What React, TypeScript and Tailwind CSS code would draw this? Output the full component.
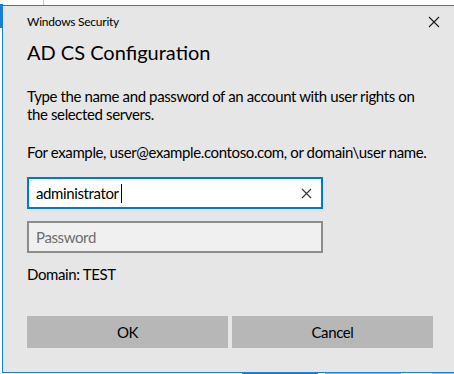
import React from "react";

export default function App() {
  const font = { fontFamily: 'Lato, "Noto Sans", Arial, sans-serif' };
  return (
    <div className="relative w-[454px] h-[374px] bg-white overflow-hidden" style={font}>
      {/* background decorations behind the dialog */}
      <div className="absolute left-0 top-[4px] w-[3px] h-[24px] bg-[#1a7fd4]" />
      <div className="absolute left-[43px] top-0 w-px h-[5px] bg-[#c8c8c8]" />
      <div className="absolute left-[242px] top-[373px] w-[76px] h-px bg-[#5c6770]" />
      <div className="absolute left-[325px] top-[373px] w-[76px] h-px bg-[#a3abb3]" />
      <div className="absolute left-[432px] top-[373px] w-[22px] h-px bg-[#b3bac1]" />

      {/* dialog */}
      <div className="absolute left-[2px] top-[5px] w-[470px] h-[368px] border border-[#1883d7] bg-[#e6e6e6] text-black">
        <div className="pl-[24px] pr-[38px]">
          <div className="flex items-center justify-between pt-[5px] h-[27px]">
            <span className="text-[12px] leading-[16px] tracking-[-0.25px]">Windows Security</span>
            <svg width="12" height="12" viewBox="0 0 12 12" className="mr-[-7px]">
              <path d="M1 1 L11 11 M11 1 L1 11" stroke="#1a1a1a" strokeWidth="1.1" fill="none" />
            </svg>
          </div>
          <div className="mt-[5px] text-[20px] leading-[28px]">AD CS Configuration</div>
          <p className="mt-[21px] text-[15px] leading-[18px] tracking-[-0.38px] whitespace-nowrap">
            Type the name and password of an account with user rights on
            <br />
            the selected servers.
          </p>
          <p className="mt-[20px] text-[15px] leading-[18px] tracking-[-0.38px] whitespace-nowrap">
            For example, user@example.contoso.com, or domain\user name.
          </p>
          <div className="mt-[16px] w-[296px] h-[32px] border-2 border-[#0078d7] bg-white flex items-center pl-[7px] pr-[9px]">
            <span className="text-[15px] leading-[18px] tracking-[-0.38px]">administrator</span>
            <span className="w-px h-[19px] bg-black ml-[2px]" />
            <span className="flex-1" />
            <svg width="11" height="11" viewBox="0 0 11 11">
              <path d="M1 1 L10 10 M10 1 L1 10" stroke="#333" strokeWidth="1.1" fill="none" />
            </svg>
          </div>
          <div className="mt-[12px] w-[296px] h-[32px] border-2 border-[#8c8c8c] bg-[#f0f0f0] flex items-center pl-[7px]">
            <span className="text-[15px] leading-[18px] tracking-[-0.38px] text-[#6e6e6e]">Password</span>
          </div>
          <div className="mt-[12px] text-[15px] leading-[18px] tracking-[-0.38px]">Domain: TEST</div>
          <div className="mt-[33px] flex gap-[4px]">
            <button className="w-[201px] h-[32px] bg-[#b7b7b7] text-[15px] tracking-[-0.38px] text-black">OK</button>
            <button className="w-[201px] h-[32px] bg-[#b7b7b7] text-[15px] tracking-[-0.38px] text-black">Cancel</button>
          </div>
        </div>
      </div>
    </div>
  );
}
